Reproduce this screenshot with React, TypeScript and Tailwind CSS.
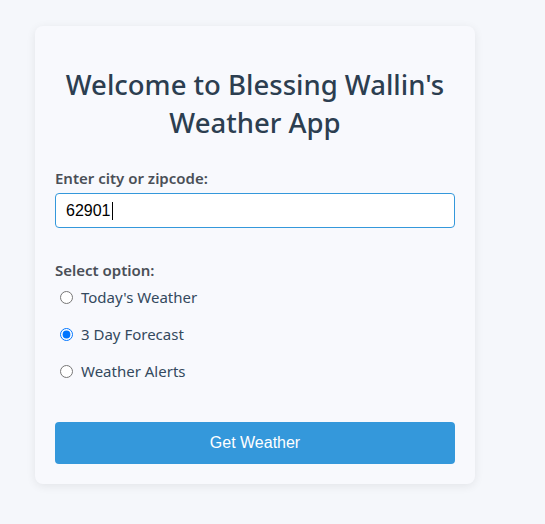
export default function App() {
  const options = ["Today's Weather", "3 Day Forecast", "Weather Alerts"];
  return (
    <div className="min-h-[524px] w-full bg-[#f5f7fb] pt-[26px] pl-[35px]" style={{ fontFamily: '"Noto Sans", "Open Sans", sans-serif' }}>
      <div className="w-[440px] rounded-lg bg-[#f8f9fd] p-5 shadow-[0_2px_10px_rgba(0,0,0,0.08)]">
        <h1 className="mt-5 mb-[26px] text-center text-[27.5px] leading-[38px] font-medium text-[#2c3e50]">
          Welcome to Blessing Wallin's Weather App
        </h1>
        <label className="block text-[15px] leading-5 font-semibold text-[#4a4f57]">Enter city or zipcode:</label>
        <div className="mt-[5px] flex h-[35px] items-center rounded-[4px] border border-[#3498db] bg-white px-[10px]">
          <span className="text-[16px] text-black" style={{ fontFamily: '"Liberation Sans", Arial, sans-serif' }}>62901</span>
          <span className="ml-px h-[18px] w-px bg-black" />
        </div>
        <div className="mt-8 text-[15px] leading-5 font-semibold text-[#4a4f57]">Select option:</div>
        <div className="mt-[5px] flex flex-col gap-[13px]">
          {options.map((o, i) => (
            <label key={o} className="flex h-6 items-center gap-[8px] pl-[5px] text-[15px] text-[#34495e]">
              <input type="radio" name="opt" defaultChecked={i === 1} className="m-0 h-[13px] w-[13px] accent-[#0075ff]" />
              {o}
            </label>
          ))}
        </div>
        <button className="mt-[39px] h-[42px] w-full rounded-[4px] bg-[#3498db] text-[16px] text-white" style={{ fontFamily: '"Liberation Sans", Arial, sans-serif' }}>
          Get Weather
        </button>
      </div>
    </div>
  );
}
